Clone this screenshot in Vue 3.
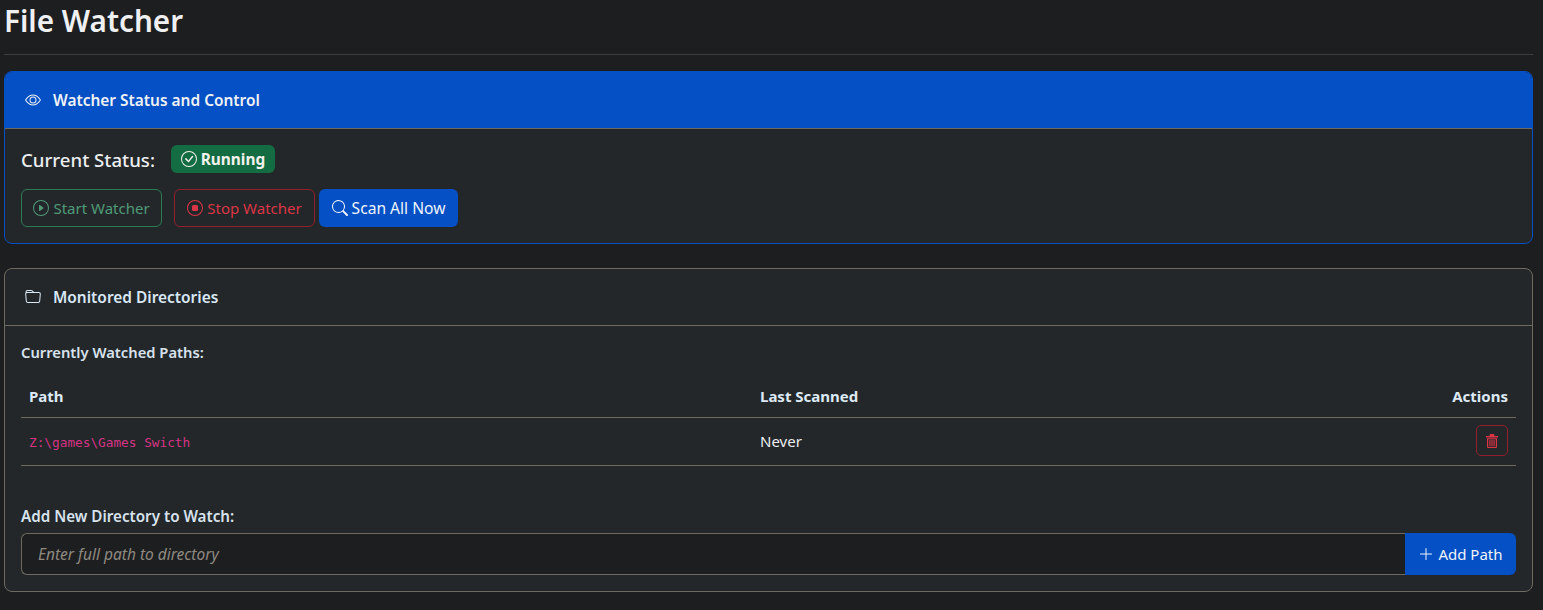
<script setup>
const paths = [{ path: 'Z:\\games\\Games Swicth', scanned: 'Never' }]
</script>

<template>
  <div class="page">
    <h1>File Watcher</h1>
    <hr />

    <section class="card card-primary">
      <header class="card-head head-primary">
        <svg class="head-icon" viewBox="0 0 16 16" fill="currentColor">
          <path d="M16 8s-3-5.5-8-5.5S0 8 0 8s3 5.5 8 5.5S16 8 16 8zM1.173 8a13.133 13.133 0 0 1 1.66-2.043C4.12 4.668 5.88 3.5 8 3.5c2.12 0 3.879 1.168 5.168 2.457A13.133 13.133 0 0 1 14.828 8c-.058.087-.122.183-.195.288-.335.48-.83 1.12-1.465 1.755C11.879 11.332 10.119 12.5 8 12.5c-2.12 0-3.879-1.168-5.168-2.457A13.134 13.134 0 0 1 1.172 8z" />
          <path d="M8 5.5a2.5 2.5 0 1 0 0 5 2.5 2.5 0 0 0 0-5zM4.5 8a3.5 3.5 0 1 1 7 0 3.5 3.5 0 0 1-7 0z" />
        </svg>
        <span>Watcher Status and Control</span>
      </header>
      <div class="card-body">
        <div class="status-row">
          <span class="status-label">Current Status:</span>
          <span class="badge">
            <svg class="icon" viewBox="0 0 16 16" fill="currentColor">
              <path d="M8 15A7 7 0 1 1 8 1a7 7 0 0 1 0 14zm0 1A8 8 0 1 0 8 0a8 8 0 0 0 0 16z" />
              <path d="M10.97 4.97a.235.235 0 0 0-.02.022L7.477 9.417 5.384 7.323a.75.75 0 0 0-1.06 1.06L6.97 11.03a.75.75 0 0 0 1.079-.02l3.992-4.99a.75.75 0 0 0-1.071-1.05z" />
            </svg>
            Running
          </span>
        </div>
        <div class="btn-row">
          <button class="btn btn-start">
            <svg class="icon" viewBox="0 0 16 16" fill="currentColor">
              <path d="M8 15A7 7 0 1 1 8 1a7 7 0 0 1 0 14zm0 1A8 8 0 1 0 8 0a8 8 0 0 0 0 16z" />
              <path d="M6.271 5.055a.5.5 0 0 1 .52.038l3.5 2.5a.5.5 0 0 1 0 .814l-3.5 2.5A.5.5 0 0 1 6 10.5v-5a.5.5 0 0 1 .271-.445z" />
            </svg>
            Start Watcher
          </button>
          <button class="btn btn-stop">
            <svg class="icon" viewBox="0 0 16 16" fill="currentColor">
              <path d="M8 15A7 7 0 1 1 8 1a7 7 0 0 1 0 14zm0 1A8 8 0 1 0 8 0a8 8 0 0 0 0 16z" />
              <path d="M5 6.5A1.5 1.5 0 0 1 6.5 5h3A1.5 1.5 0 0 1 11 6.5v3A1.5 1.5 0 0 1 9.5 11h-3A1.5 1.5 0 0 1 5 9.5v-3z" />
            </svg>
            Stop Watcher
          </button>
          <button class="btn btn-scan">
            <svg class="icon" viewBox="0 0 16 16" fill="currentColor">
              <path d="M11.742 10.344a6.5 6.5 0 1 0-1.397 1.398h-.001c.03.04.062.078.098.115l3.85 3.85a1 1 0 0 0 1.415-1.414l-3.85-3.85a1.007 1.007 0 0 0-.115-.1zM12 6.5a5.5 5.5 0 1 1-11 0 5.5 5.5 0 0 1 11 0z" />
            </svg>
            Scan All Now
          </button>
        </div>
      </div>
    </section>

    <section class="card">
      <header class="card-head">
        <svg class="head-icon" viewBox="0 0 16 16" fill="currentColor">
          <path d="M.54 3.87.5 3a2 2 0 0 1 2-2h3.672a2 2 0 0 1 1.414.586l.828.828A2 2 0 0 0 9.828 3h3.982a2 2 0 0 1 1.992 2.181l-.637 7A2 2 0 0 1 13.174 14H2.826a2 2 0 0 1-1.991-1.819l-.637-7a1.99 1.99 0 0 1 .342-1.31zM2.19 4a1 1 0 0 0-.996 1.09l.637 7a1 1 0 0 0 .995.91h10.348a1 1 0 0 0 .995-.91l.637-7A1 1 0 0 0 13.81 4H2.19zm4.69-1.707A1 1 0 0 0 6.172 2H2.5a1 1 0 0 0-1 .981l.006.139C1.72 3.042 1.95 3 2.19 3h5.396l-.707-.707z" />
        </svg>
        <span>Monitored Directories</span>
      </header>
      <div class="card-body">
        <p class="label">Currently Watched Paths:</p>
        <table>
          <thead>
            <tr>
              <th class="col-path">Path</th>
              <th class="col-scan">Last Scanned</th>
              <th class="col-act">Actions</th>
            </tr>
          </thead>
          <tbody>
            <tr v-for="row in paths" :key="row.path">
              <td><code>{{ row.path }}</code></td>
              <td>{{ row.scanned }}</td>
              <td class="col-act">
                <button class="btn-del">
                  <svg viewBox="0 0 12 14" fill="currentColor">
                    <path d="M4.5 0h3a.8.8 0 0 1 .8.8V2H12v1.6H0V2h3.7V.8A.8.8 0 0 1 4.5 0z" />
                    <path d="M1 4.2h10V13a1 1 0 0 1-1 1H2a1 1 0 0 1-1-1V4.2zm1.2 1V12.9h7.6V5.200z" />
                    <path d="M3.400 5.800h1.100v6.500H3.400zM5.450 5.800h1.100v6.500H5.450zM7.500 5.800h1.100v6.500H7.500z" />
                  </svg>
                </button>
              </td>
            </tr>
          </tbody>
        </table>
        <label class="label add-label" for="new-path">Add New Directory to Watch:</label>
        <div class="input-group">
          <input id="new-path" type="text" placeholder="Enter full path to directory" />
          <button class="btn-add">
            <svg class="icon" viewBox="0 0 16 16" fill="currentColor">
              <path fill-rule="evenodd" d="M8 2a.5.5 0 0 1 .5.5v5h5a.5.5 0 0 1 0 1h-5v5a.5.5 0 0 1-1 0v-5h-5a.5.5 0 0 1 0-1h5v-5A.5.5 0 0 1 8 2Z" />
            </svg>
            Add Path
          </button>
        </div>
      </div>
    </section>
  </div>
</template>

<style>
html,
body {
  background: #1d1e20;
  overflow: hidden;
}
</style>

<style scoped>
.page {
  box-sizing: border-box;
  height: 610px;
  padding: 0 10px 0 4px;
  color: #dee2e6;
  font-family: "Noto Sans", "Open Sans", sans-serif;
  font-size: 15px;
}
h1 {
  margin: 0;
  height: 43px;
  font-size: 29.7px;
  line-height: 42px;
  font-weight: 600;
  color: #eef0f2;
}
hr {
  margin: 11px 0 16px;
  border: 0;
  border-top: 1px solid #3c3e40;
}
.card {
  background: #23272a;
  border: 1px solid #6f6a60;
  border-radius: 8px;
  margin-bottom: 24px;
  overflow: hidden;
}
.card-primary {
  border-color: #0450c4;
}
.card-head {
  box-sizing: border-box;
  height: 57px;
  padding: 0 20px;
  display: flex;
  align-items: center;
  gap: 12px;
  font-weight: 600;
  font-size: 15.45px;
  color: #d9e8f5;
  border-bottom: 1px solid #6f6a60;
}
.head-primary {
  background: #0450c4;
  color: #f0f2f5;
}
.head-icon {
  width: 16px;
  height: 16px;
  flex: none;
}
.icon {
  width: 16px;
  height: 16px;
  flex: none;
}
.card-body {
  padding: 16px;
}
.status-row {
  display: flex;
  align-items: center;
  gap: 16px;
  height: 28px;
  margin-bottom: 16px;
}
.status-label {
  font-size: 18.6px;
  font-weight: 500;
  color: #eceef0;
}
.badge {
  box-sizing: border-box;
  height: 28px;
  width: 104px;
  display: flex;
  align-items: center;
  justify-content: center;
  gap: 4px;
  background: #146c43;
  border-radius: 6px;
  font-weight: 700;
  font-size: 15.4px;
  color: #f2f2ee;
}
.btn-row {
  display: flex;
  height: 38px;
}
.btn {
  box-sizing: border-box;
  height: 38px;
  display: flex;
  align-items: center;
  justify-content: center;
  gap: 4px;
  border-radius: 6px;
  border: 1px solid transparent;
  background: transparent;
  font-family: inherit;
  font-size: 15px;
  padding: 0;
}
.btn-start {
  width: 141px;
  border-color: #2d7a57;
  color: #4f9a78;
}
.btn-stop {
  width: 141px;
  margin-left: 12px;
  border-color: #931f2d;
  color: #dc3545;
}
.btn-scan {
  width: 139px;
  margin-left: 4px;
  background: #0450c4;
  color: #f0f4fa;
  font-size: 15.6px;
}
.label {
  display: block;
  margin: 0;
  font-weight: 600;
  font-size: 14.75px;
  line-height: 21px;
  color: #d8e2ec;
}
table {
  width: 100%;
  margin-top: 12px;
  border-collapse: collapse;
  table-layout: fixed;
}
th {
  height: 42px;
  padding: 0 8px;
  text-align: left;
  font-weight: 700;
  font-size: 15px;
  color: #dde9f4;
  border-bottom: 1px solid #6f6a60;
}
td {
  height: 45px;
  padding: 0 8px 2px;
  border-bottom: 1px solid #6f6a60;
  color: #eceef0;
}
.col-path {
  width: 715px;
}
.col-act {
  width: 200px;
  text-align: right;
}
code {
  font-family: "DejaVu Sans Mono", "Liberation Mono", monospace;
  font-size: 12.75px;
  color: #d63384;
}
.btn-del {
  box-sizing: border-box;
  width: 32px;
  height: 31px;
  padding: 0;
  background: transparent;
  border: 1px solid #931f2d;
  border-radius: 5px;
  color: #dc3545;
  display: inline-flex;
  align-items: center;
  justify-content: center;
  vertical-align: middle;
}
.btn-del svg {
  width: 12px;
  height: 14px;
}
.add-label {
  margin-top: 40px;
  margin-bottom: 6px;
  font-size: 15.2px;
}
.input-group {
  display: flex;
  height: 42px;
}
input {
  box-sizing: border-box;
  flex: 1;
  min-width: 0;
  height: 42px;
  padding: 0 16px;
  background: #1d1e20;
  border: 1px solid #6f6a60;
  border-right: 0;
  border-radius: 6px 0 0 6px;
  color: #dee2e6;
  font-family: inherit;
  font-size: 15.5px;
  outline: none;
}
input::placeholder {
  color: #8f8a80;
  font-style: italic;
}
.btn-add {
  box-sizing: border-box;
  width: 111px;
  height: 42px;
  display: flex;
  align-items: center;
  justify-content: center;
  gap: 4px;
  padding: 0;
  background: #0450c4;
  border: 0;
  border-radius: 0 6px 6px 0;
  color: #f0f4fa;
  font-family: inherit;
  font-size: 15px;
}
</style>
